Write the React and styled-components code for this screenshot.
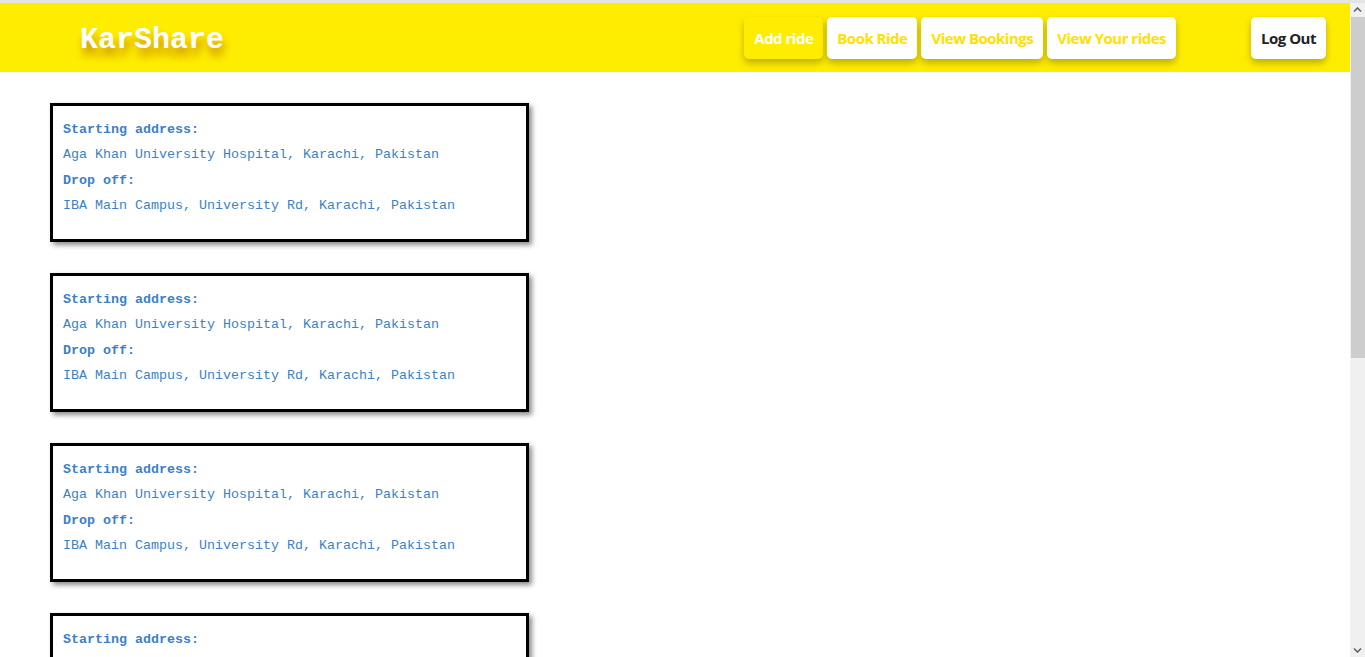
import styled, { createGlobalStyle } from 'styled-components';

const GlobalStyle = createGlobalStyle`
	html, body {
		margin: 0;
		padding: 0;
		background: #ffffff;
	}

	body {
		border-top: 3px solid #e4e4e4;
		padding-right: 15px;
	}
`;

const rides = [1, 2, 3, 4, 5];

const Header = styled.header`
	height: 69px;
	background: #ffed00;
	display: flex;
	align-items: center;
	padding: 0 24px 0 80px;

	& .logo {
		font-family: 'Liberation Mono', 'Courier New', monospace;
		font-weight: bold;
		font-size: 30px;
		color: #ffffff;
		text-shadow: 2px 8px 9px rgba(200, 135, 0, 0.95);
		margin-top: 4px;
	}

	& .nav {
		margin-left: auto;
		display: flex;
		gap: 4px;
	}

	& .logout {
		margin-left: 75px;
	}
`;

const NavButton = styled.button`
	height: 42px;
	padding: 0 10px;
	border: none;
	border-radius: 5px;
	font-family: 'Open Sans', 'Noto Sans', sans-serif;
	font-weight: 700;
	font-size: 15px;
	letter-spacing: -0.5px;
	cursor: pointer;
	background: ${(p) => (p.$active ? '#ffed00' : '#ffffff')};
	color: ${(p) => (p.$dark ? '#222222' : p.$active ? '#ffffff' : '#ffe000')};
	box-shadow: 0 4px 7px rgba(90, 80, 0, 0.4);
`;

const List = styled.main`
	padding: 31px 0 40px 50px;
	display: flex;
	flex-direction: column;
	gap: 31px;
`;

const Card = styled.div`
	box-sizing: border-box;
	width: 479px;
	height: 139px;
	border: 3px solid #000000;
	padding: 11px 10px 0;
	box-shadow: 3px 3px 5px rgba(0, 0, 0, 0.45);
	font-family: 'Liberation Mono', 'Courier New', monospace;
	font-size: 13.33px;
	line-height: 25.4px;
	color: #3c7fc8;

	& .label {
		font-weight: bold;
	}
`;

// fake browser scrollbar from the screenshot
const Scrollbar = styled.div`
	position: fixed;
	top: 3px;
	right: 0;
	bottom: 0;
	width: 15px;
	background: #f0f0f0;
	display: flex;
	flex-direction: column;
	align-items: stretch;

	& .arrow {
		height: 14px;
		display: flex;
		align-items: center;
		justify-content: center;
	}

	& .thumb {
		height: 341px;
		background: #cdcdcd;
		margin-left: 1px;
	}

	& .spacer {
		flex: 1;
	}
`;

const Chevron = ({ down }) => (
	<svg width="9" height="6" viewBox="0 0 9 6">
		<path
			d={down ? 'M1 1.5 L4.5 5 L8 1.5' : 'M1 4.5 L4.5 1 L8 4.5'}
			fill="none"
			stroke="#606060"
			strokeWidth="1.6"
		/>
	</svg>
);

function App() {
	return (
		<>
			<GlobalStyle />
			<Header>
				<div className="logo">KarShare</div>
				<div className="nav">
					<NavButton $active>Add ride</NavButton>
					<NavButton>Book Ride</NavButton>
					<NavButton>View Bookings</NavButton>
					<NavButton>View Your rides</NavButton>
				</div>
				<NavButton className="logout" $dark>
					Log Out
				</NavButton>
			</Header>
			<List>
				{rides.map((id) => (
					<Card key={id}>
						<div className="label">Starting address:</div>
						<div>Aga Khan University Hospital, Karachi, Pakistan</div>
						<div className="label">Drop off:</div>
						<div>IBA Main Campus, University Rd, Karachi, Pakistan</div>
					</Card>
				))}
			</List>
			<Scrollbar>
				<div className="arrow">
					<Chevron />
				</div>
				<div className="thumb" />
				<div className="spacer" />
				<div className="arrow">
					<Chevron down />
				</div>
			</Scrollbar>
		</>
	);
}

export default App;
